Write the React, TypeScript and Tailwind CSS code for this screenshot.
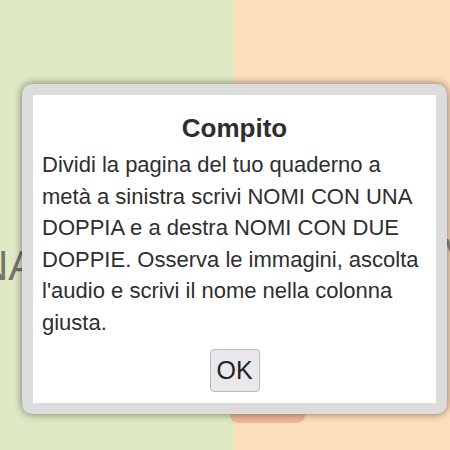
export default function App() {
  return (
    <div
      className="relative h-[450px] w-[450px] overflow-hidden"
      style={{ fontFamily: '"Liberation Sans", Arial, sans-serif' }}
    >
      {/* page behind the dialog */}
      <div className="flex h-full w-full">
        <div className="relative w-[234px] bg-[#dfeac5]">
          <span className="absolute left-[-22px] top-[234px] text-[42px] text-[#75756e]">NA</span>
        </div>
        <div className="relative flex-1 bg-[#fddfbc]">
          <div className="absolute left-[-4px] top-[404px] h-[19px] w-[75px] rounded-b-[8px] bg-[#f2b89b]" />
          <span className="absolute left-[210px] top-[222px] text-[42px] text-[#8a8a82]">V</span>
        </div>
      </div>

      {/* dialog */}
      <div className="absolute left-[22px] top-[84px] h-[330px] w-[425px] rounded-[10px] bg-[#dcdcdc] p-[11px] shadow-[0_0_9px_rgba(0,0,0,0.5)]">
        <div className="flex h-full flex-col items-center bg-white px-[9px] pt-[18px] text-[#2e2e2e]">
          <h1 className="text-[26px] font-bold leading-[30px]">Compito</h1>
          <p className="mt-[6px] w-full text-[22px] leading-[31.5px]">
            Dividi la pagina del tuo quaderno a metà a sinistra scrivi NOMI CON UNA DOPPIA e a
            destra NOMI CON DUE DOPPIE. Osserva le immagini, ascolta l'audio e scrivi il nome
            nella colonna giusta.
          </p>
          <button className="mt-[11px] h-[43px] w-[50px] rounded-[4px] border border-[#b9b9c0] bg-[#e9e9ed] text-[25px] text-[#222]">
            OK
          </button>
        </div>
      </div>
    </div>
  );
}
